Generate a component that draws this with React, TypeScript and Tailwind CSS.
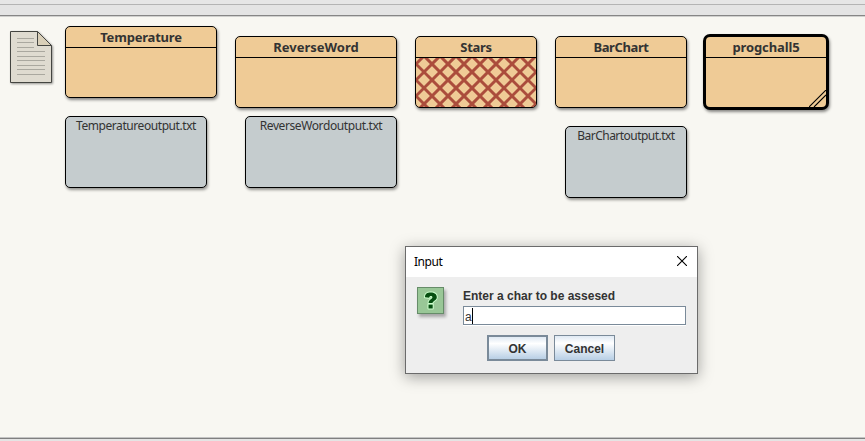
import React from "react";

const sans = "font-['Noto_Sans','Open_Sans',sans-serif]";

type ClassNodeProps = {
  name: string;
  place: string;
  spacing: string;
  selected?: boolean;
  children?: React.ReactNode;
};

function ClassNode({ name, place, spacing, selected, children }: ClassNodeProps) {
  return (
    <div
      className={`absolute flex flex-col overflow-hidden bg-[#efcb96] shadow-[1px_2px_3px_rgba(0,0,0,0.45)] ${
        selected ? "rounded-[7px] border-[3px] border-black" : "rounded-[5px] border border-black"
      } ${place}`}
    >
      <div
        className={`flex h-[21px] shrink-0 items-center justify-center border-b border-black text-[13px] leading-[20px] font-bold text-[#333] ${spacing}`}
      >
        {name}
      </div>
      <div className="flex flex-1 items-end justify-end">{children}</div>
    </div>
  );
}

function FileNode({ name, place, spacing }: { name: string; place: string; spacing: string }) {
  return (
    <div
      className={`absolute flex justify-center rounded-[5px] border border-black bg-[#c5ccce] text-[12px] leading-[18px] text-[#333] shadow-[1px_2px_3px_rgba(0,0,0,0.4)] ${place}`}
    >
      <span className={`whitespace-nowrap ${spacing}`}>{name}</span>
    </div>
  );
}

function Hatch() {
  const offsets = Array.from({ length: 14 }, (_, i) => i * 16);
  return (
    <svg width="120" height="49" viewBox="416 58 120 49" className="block">
      <g stroke="#ab4d3c" strokeWidth="3">
        {offsets.map((o) => (
          <React.Fragment key={o}>
            <path d={`M${352 + o} 48 l64 64`} />
            <path d={`M${400 + o} 48 l-64 64`} />
          </React.Fragment>
        ))}
      </g>
    </svg>
  );
}

function NoteIcon() {
  return (
    <svg
      width="48"
      height="60"
      viewBox="0 0 48 60"
      className="absolute top-[28px] left-[8px] drop-shadow-[1px_1px_1px_rgba(0,0,0,0.4)]"
    >
      <path d="M2.5 3.5H29.5L43.5 17.5V54.5H2.5Z" fill="#dfdbd0" stroke="#444541" />
      <path d="M29.5 3.5V17.5H43.5Z" fill="#d9cfb8" stroke="#444541" />
      <path
        d="M9 10.5H26M9 14.5H26M9 19.5H26M9 23.5H37M9 28.5H37M9 32.5H37M9 37.5H37M9 41.5H37M9 46.5H37"
        stroke="#aaa89f"
        fill="none"
      />
    </svg>
  );
}

function QuestionIcon() {
  return (
    <div className="flex size-[27px] items-center justify-center border border-[#668c69] bg-[#99c797] shadow-[2px_3px_3px_rgba(0,0,0,0.3)]">
      <svg width="25" height="25" viewBox="0 0 25 25">
        <g stroke="#ccffcc" strokeWidth="2" strokeLinejoin="round" fill="#ccffcc">
          <path d="M7 9.3C7 6 9.2 4.6 12.7 4.6C16.4 4.6 18.8 6.3 18.8 9.2C18.8 12.6 14.6 12.8 14.6 15H10.6C10.6 11.5 14.4 11.3 14.4 9.3C14.4 7.4 11.2 7.4 11.2 9.8Z" />
          <path d="M10.5 16.6h4.2v3.9h-4.2z" />
        </g>
        <g fill="#064e10">
          <path d="M7 9.3C7 6 9.2 4.6 12.7 4.6C16.4 4.6 18.8 6.3 18.8 9.2C18.8 12.6 14.6 12.8 14.6 15H10.6C10.6 11.5 14.4 11.3 14.4 9.3C14.4 7.4 11.2 7.4 11.2 9.8Z" />
          <path d="M10.5 16.6h4.2v3.9h-4.2z" />
        </g>
      </svg>
    </div>
  );
}

function DialogButton({ label, focused }: { label: string; focused?: boolean }) {
  return (
    <button
      className={`flex h-[26px] w-[61px] items-center justify-center border-[#7a8a99] bg-linear-to-b from-[#dfe9f3] via-white via-30% to-[#b8cfe5] pt-[2px] text-[12px] font-bold text-[#333] ${
        focused ? "border-2" : "border"
      }`}
    >
      {label}
    </button>
  );
}

function InputDialog() {
  return (
    <div className="absolute top-[246px] left-[405px] flex h-[128px] w-[293px] flex-col border border-[#6b6b6b] bg-[#eee] font-['Liberation_Sans',Arial,sans-serif] shadow-[0_3px_14px_rgba(0,0,0,0.36)]">
      <div className="flex h-[30px] shrink-0 items-center justify-between bg-white pr-[10px] pl-[8px]">
        <span className={`text-[12px] tracking-[-0.45px] text-black ${sans}`}>Input</span>
        <svg width="10" height="10" viewBox="0 0 10 10" className="-mt-[2px]">
          <path d="M0 0L10 10M10 0L0 10" stroke="#000" strokeWidth="1.1" />
        </svg>
      </div>
      <div className="flex pt-[10px] pl-[11px]">
        <QuestionIcon />
        <div className="ml-[19px] flex flex-col">
          <label className="h-[19px] text-[12px] leading-[19px] font-bold text-[#333]">
            Enter a char to be assesed
          </label>
          <div className="flex h-[19px] w-[223px] items-center border border-[#7a8a99] bg-white pl-px text-[12px] text-[#333] shadow-[0_1px_0_white]">
            <span className="pt-[2px]">a</span>
            <span className="h-[16px] w-px bg-black" />
          </div>
        </div>
      </div>
      <div className="mt-[10px] flex gap-[6px] pl-[81px]">
        <DialogButton label="OK" focused />
        <DialogButton label="Cancel" />
      </div>
    </div>
  );
}

export default function App() {
  return (
    <div className={`flex h-[441px] w-[865px] flex-col overflow-hidden bg-[#e4e4e4] ${sans}`}>
      <div className="h-[5px] shrink-0 border-b border-[#b4b4b4] bg-[#e6e6e6]" />
      <div className="h-[11px] shrink-0 border-b border-[#868686]" />
      <main className="relative h-[421px] shrink-0 border-t border-[#d0d0ce] bg-[#f8f7f2]">
        <div className="absolute -top-[17px] left-0 h-[437px] w-full">
          <NoteIcon />
          <ClassNode name="Temperature" place="top-[26px] left-[65px] h-[72px] w-[152px]" spacing="tracking-[-0.2px]" />
          <ClassNode name="ReverseWord" place="top-[36px] left-[235px] h-[72px] w-[162px]" spacing="" />
          <ClassNode name="Stars" place="top-[36px] left-[415px] h-[72px] w-[122px]" spacing="tracking-[-0.3px]">
            <Hatch />
          </ClassNode>
          <ClassNode name="BarChart" place="top-[36px] left-[555px] h-[72px] w-[132px]" spacing="tracking-[-0.4px]" />
          <ClassNode name="progchall5" place="top-[34px] left-[703px] h-[76px] w-[126px]" spacing="tracking-[-0.1px]" selected>
            <svg width="17" height="17" viewBox="0 0 17 17">
              <path d="M0 17L17 0M5 17L17 5" stroke="#000" strokeWidth="1.1" />
            </svg>
          </ClassNode>
          <FileNode name="Temperatureoutput.txt" place="top-[116px] left-[65px] h-[72px] w-[142px]" spacing="tracking-[-0.43px]" />
          <FileNode name="ReverseWordoutput.txt" place="top-[116px] left-[245px] h-[72px] w-[152px]" spacing="tracking-[-0.4px]" />
          <FileNode name="BarChartoutput.txt" place="top-[126px] left-[565px] h-[72px] w-[122px]" spacing="tracking-[-0.53px]" />
          <InputDialog />
        </div>
      </main>
      <div className="h-[2px] shrink-0 border-t border-b border-t-[#c4c4c4] border-b-[#808080]" />
    </div>
  );
}
